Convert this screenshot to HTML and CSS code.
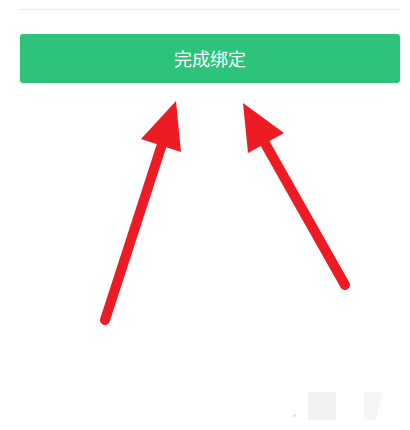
FILE: index.html
```html
<!DOCTYPE html>
<html lang="zh">
<head>
<meta charset="utf-8">
<link rel="stylesheet" href="styles.css">
</head>
<body>
<div class="page">
  <div class="divider"></div>
  <button class="btn">完成绑定</button>
  <div class="footer">
    <span class="dot"></span>
    <span class="tile"></span>
    <span class="tile tile-cut"></span>
  </div>
</div>
<svg class="arrows" width="410" height="430" viewBox="0 0 410 430">
  <g stroke="#ed1c24" stroke-width="10" stroke-linecap="round" fill="none">
    <line x1="105" y1="320" x2="165" y2="135"/>
    <line x1="345" y1="285" x2="262" y2="138"/>
  </g>
  <g fill="#ed1c24">
    <polygon points="176,101 141,139 181,152"/>
    <polygon points="243,103 284,133 248,153"/>
  </g>
</svg>
</body>
</html>
```
FILE: styles.css
```css
html, body {
  margin: 0;
  padding: 0;
  background: #ffffff;
}
body {
  font-family: "Noto Sans CJK SC", "Noto Sans", sans-serif;
  width: 410px;
  height: 430px;
  overflow: hidden;
  position: relative;
}
.page {
  display: flex;
  flex-direction: column;
  padding: 9px 10px 0 20px;
  height: 430px;
  box-sizing: border-box;
}
.divider {
  height: 1px;
  background: #ececec;
  margin-bottom: 24px;
}
.btn {
  height: 49px;
  border: none;
  border-radius: 3px;
  background: #2dc37a;
  color: #ffffff;
  font-family: "Noto Sans CJK SC", sans-serif;
  font-size: 18px;
  font-weight: 400;
  padding: 0;
  padding-bottom: 1px;
}
.footer {
  margin-top: auto;
  display: flex;
  align-items: flex-end;
  padding-left: 273px;
  padding-bottom: 10px;
}
.dot {
  width: 3px;
  height: 3px;
  border-radius: 50%;
  background: #e6e6e6;
  margin-right: 12px;
  margin-bottom: 3px;
}
.tile {
  width: 28px;
  height: 28px;
  background: #f2f2f2;
}
.tile-cut {
  width: 19px;
  margin-left: 28px;
  background: #f6f6f6;
  clip-path: polygon(0 0, 100% 0, 60% 100%, 0 100%);
}
.arrows {
  position: absolute;
  left: 0;
  top: 0;
  pointer-events: none;
}
```
